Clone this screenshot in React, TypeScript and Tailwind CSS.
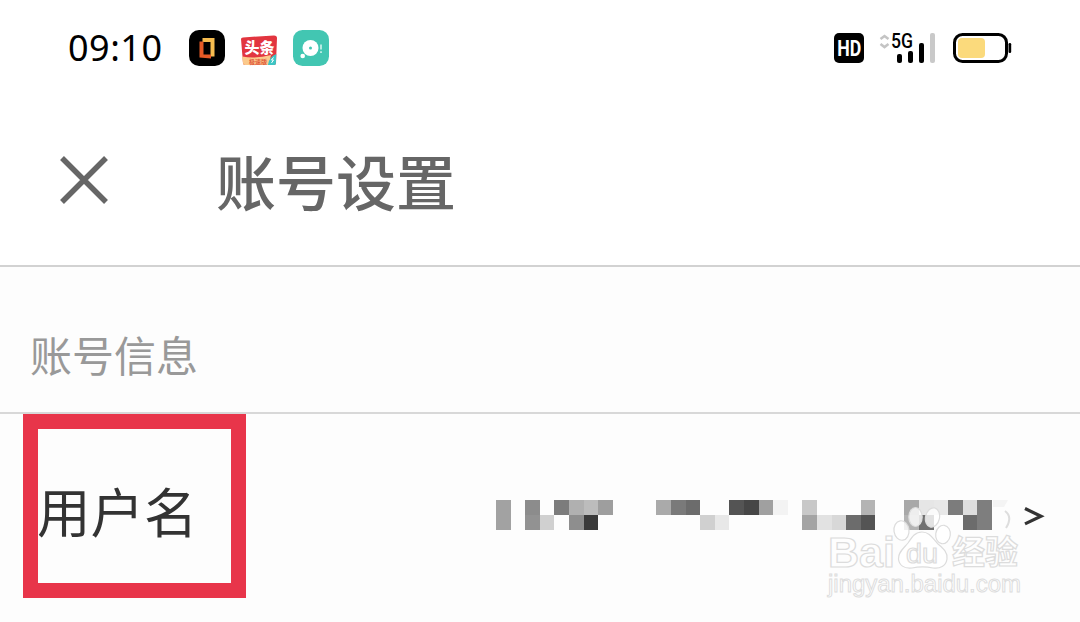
interface Cell {
  col: number;
  row: number;
  color: string;
}

const CELL_ROWS: Record<number, string>[] = [
  {
    0: "#a2a2a2", 2: "#8c8c8c", 4: "#7c7c7c", 5: "#b0b0b0", 6: "#bcbcbc",
    7: "#9e9e9e", 11: "#aaaaaa", 12: "#7a7a7a", 13: "#6c6c6c", 16: "#545454",
    17: "#464646", 18: "#a0a0a0", 19: "#f3f3f3", 21: "#c8c8c8", 25: "#b4b4b4",
    28: "#a8a8a8", 29: "#e6e6e6", 30: "#e8e8e8", 31: "#7c7c7c", 32: "#dedede",
    33: "#7e7e7e",
  },
  {
    0: "#a2a2a2", 2: "#929292", 3: "#d0d0d0", 5: "#8e8e8e", 6: "#3a3a3a",
    14: "#d0d0d0", 15: "#e8e8e8", 21: "#a4a4a4", 22: "#e2e2e2", 23: "#d8d8d8",
    24: "#6c6c6c", 25: "#545454", 28: "#b4b4b4", 29: "#707070", 32: "#6c6c6c",
    33: "#7e7e7e",
  },
];

const cells: Cell[] = CELL_ROWS.flatMap((colors, row) =>
  Object.entries(colors).map(([col, color]) => ({ col: Number(col), row, color }))
);

function OfficeIcon() {
  return (
    <svg width="36" height="36" viewBox="0 0 36 36">
      <rect width="36" height="36" rx="10" fill="#000" />
      <path d="M13.500 8H25.500V26.500H21.500V12H13.500z" fill="#f7bd50" />
      <path d="M10.500 11.500H14.500V24.500H22V28.500L10.500 27.500z" fill="#e65a26" />
    </svg>
  );
}

function NewsIcon() {
  return (
    <svg width="38" height="36" viewBox="0 0 38 36">
      <path d="M1 9Q1 7.500 3 7.400L34 5.500Q37 5.500 37 8L36 33Q36 35 34 35H5Q3 35 3 33z" fill="#e2353f" />
      <path d="M2 26.500Q16 29 31 25L29 35H5Q3 35 3 33z" fill="#fbc98b" />
      <path d="M36.300 24l-.4 9.500q0 1.500-2 1.500h-6q1-8 8.400-11z" fill="#3cc5c4" />
      <path d="M33.500 27.500l-2 2.500h2l-2 3" stroke="#fff" strokeWidth="1" fill="none" />
      <text x="4.500" y="22.500" fontSize="15" fontWeight="900" fill="#fff" className="font-['Noto_Sans_CJK_SC',sans-serif]">
        头条
      </text>
      <text x="9" y="33.500" fontSize="6" fontWeight="700" fill="#e0583c" className="font-['Noto_Sans_CJK_SC',sans-serif]">
        极速版
      </text>
    </svg>
  );
}

function BubbleIcon() {
  return (
    <svg width="36" height="36" viewBox="0 0 36 36">
      <rect width="36" height="36" rx="9.500" fill="#42c6b2" />
      <circle cx="17.500" cy="18" r="8" fill="#fff" />
      <circle cx="17.500" cy="18" r="1.500" fill="#42c6b2" />
      <circle cx="9.700" cy="26" r="2.300" fill="#fff" />
      <path d="M28 14.500v5M28 21.300v1.700" stroke="#d5f3ee" strokeWidth="1.600" />
    </svg>
  );
}

function HdIcon() {
  return (
    <svg width="30" height="30" viewBox="0 0 30 30" className="overflow-visible font-['Roboto',sans-serif]">
      <rect width="30" height="30" rx="5" />
      <text x="3.200" y="22.500" fontSize="21.500" fontWeight="700" fill="#fff" textLength="24" lengthAdjust="spacingAndGlyphs">
        HD
      </text>
    </svg>
  );
}

function SignalIcon() {
  return (
    <svg width="58" height="34" viewBox="0 0 58 34" className="overflow-visible">
      <path d="M1.500 8l4-3 4 3M1.500 13l4 3 4-3" stroke="#c4c4c4" strokeWidth="2.600" fill="none" />
      <text x="12" y="16.500" fontSize="20.500" fontWeight="500" textLength="22" lengthAdjust="spacingAndGlyphs" className="font-['Roboto',sans-serif]">
        5G
      </text>
      <rect x="18" y="23" width="5" height="9" rx="2" />
      <rect x="29" y="20" width="5" height="12" rx="2" />
      <rect x="40" y="12" width="5" height="20" rx="2" />
      <rect x="51" y="2" width="5" height="30" rx="2" fill="#c9c9c9" />
    </svg>
  );
}

function BatteryIcon() {
  return (
    <svg width="59" height="30" viewBox="0 0 59 30">
      <rect x="1.500" y="1.500" width="52" height="27" rx="8" fill="#fff" stroke="#000" strokeWidth="3" />
      <rect x="5" y="5" width="27" height="20" rx="4" fill="#fbda7c" />
      <rect x="55.500" y="10" width="2.700" height="10" rx="1.300" />
    </svg>
  );
}

function Watermark() {
  return (
    <svg
      width="200"
      height="100"
      viewBox="0 0 200 100"
      className="absolute top-[503px] left-[825px]"
      fill="#fff"
      fillOpacity="0.8"
      stroke="#dcdcdc"
      strokeWidth="1.200"
    >
      <text x="3" y="64" fontSize="42" fontWeight="700" textLength="67" lengthAdjust="spacingAndGlyphs" className="font-['Liberation_Sans',sans-serif]">
        Bai
      </text>
      <ellipse cx="76.500" cy="27.500" rx="7.500" ry="9.800" transform="rotate(-8 76.500 27.500)" />
      <ellipse cx="90.500" cy="14" rx="6.700" ry="9.500" />
      <ellipse cx="107.500" cy="14.500" rx="7" ry="9.800" transform="rotate(12 107.500 14.500)" />
      <ellipse cx="118" cy="31.500" rx="7.300" ry="9.300" transform="rotate(8 118 31.500)" />
      <path d="M97 29C105 29 108 36 113 41C119 46 123 50 122 56C121 63 115 66 108 65C101 63.500 94 63.500 87 65C79 66 74 62 73.500 56C73 49 79 45 83 40C87 34 90 29 97 29z" />
      <text x="81" y="60" fontSize="27" textLength="32" lengthAdjust="spacingAndGlyphs" className="font-['Liberation_Sans',sans-serif]">
        du
      </text>
      <text x="127" y="61" fontSize="33" fontWeight="700" className="font-['Noto_Sans_CJK_SC',sans-serif]">
        经验
      </text>
      <text x="3" y="89" fontSize="23" strokeWidth="0.900" textLength="193" lengthAdjust="spacingAndGlyphs" className="font-['Liberation_Sans',sans-serif]">
        jingyan.baidu.com
      </text>
    </svg>
  );
}

export default function App() {
  return (
    <div className="relative flex h-[622px] w-[1080px] flex-col overflow-hidden bg-[#fdfdfd] font-['Noto_Sans_CJK_SC',sans-serif]">
      {/* Status bar */}
      <div className="flex h-24 items-center justify-between bg-white pr-[68px] pl-[68px]">
        <div className="flex items-center">
          <span className="w-[121px] font-['Noto_Sans',sans-serif] text-[36px] leading-none tracking-[0.5px] text-black">
            09:10
          </span>
          <div className="flex items-center gap-[15px]">
            <OfficeIcon />
            <NewsIcon />
            <BubbleIcon />
          </div>
        </div>
        <div className="flex items-center">
          <div className="mr-[15px]">
            <HdIcon />
          </div>
          <SignalIcon />
          <div className="ml-4">
            <BatteryIcon />
          </div>
        </div>
      </div>

      {/* Title bar */}
      <div className="flex h-[171px] items-center border-b-2 border-[#d2d2d2] bg-white pb-0.5 pl-[60px]">
        <svg width="48" height="48" viewBox="0 0 48 48" className="mr-[108px]">
          <path d="M2 2l44 44M46 2L2 46" stroke="#666" strokeWidth="5.500" />
        </svg>
        <h1 className="text-[60px] leading-none font-medium text-[#666]">账号设置</h1>
      </div>

      {/* Section heading */}
      <div className="flex h-[147px] items-center border-b-2 border-[#d8d8d8] pt-7 pl-[30px]">
        <h2 className="text-[42px] leading-none text-[#999]">账号信息</h2>
      </div>

      {/* Username row */}
      <div className="flex h-[208px] items-start">
        <div className="ml-[23px] flex h-[184px] w-[223px] items-center border-[15.500px] border-[#e8354a]">
          <span className="-ml-px pt-2 text-[53.500px] leading-none whitespace-nowrap text-[#333]">用户名</span>
        </div>
        <div className="mt-[86px] ml-[250px] grid h-[30px] w-[496px] grid-cols-[repeat(34,minmax(0,1fr))] grid-rows-2">
          {cells.map(({ col, row, color }) => (
            <div
              key={`${row}-${col}`}
              style={{ gridColumn: col + 1, gridRow: row + 1, backgroundColor: color }}
            />
          ))}
        </div>
        <svg width="60" height="30" viewBox="0 0 60 30" className="mt-[86px]">
          <path d="M1 0h15l-4 7H1z" fill="#f4f4f4" />
          <path d="M13 11q8 6 1 17" stroke="#ddd" strokeWidth="2" fill="none" />
          <path d="M33 8.500l16 7.700-16 7.700" stroke="#333" strokeWidth="3.200" fill="none" />
        </svg>
      </div>

      <Watermark />
    </div>
  );
}
